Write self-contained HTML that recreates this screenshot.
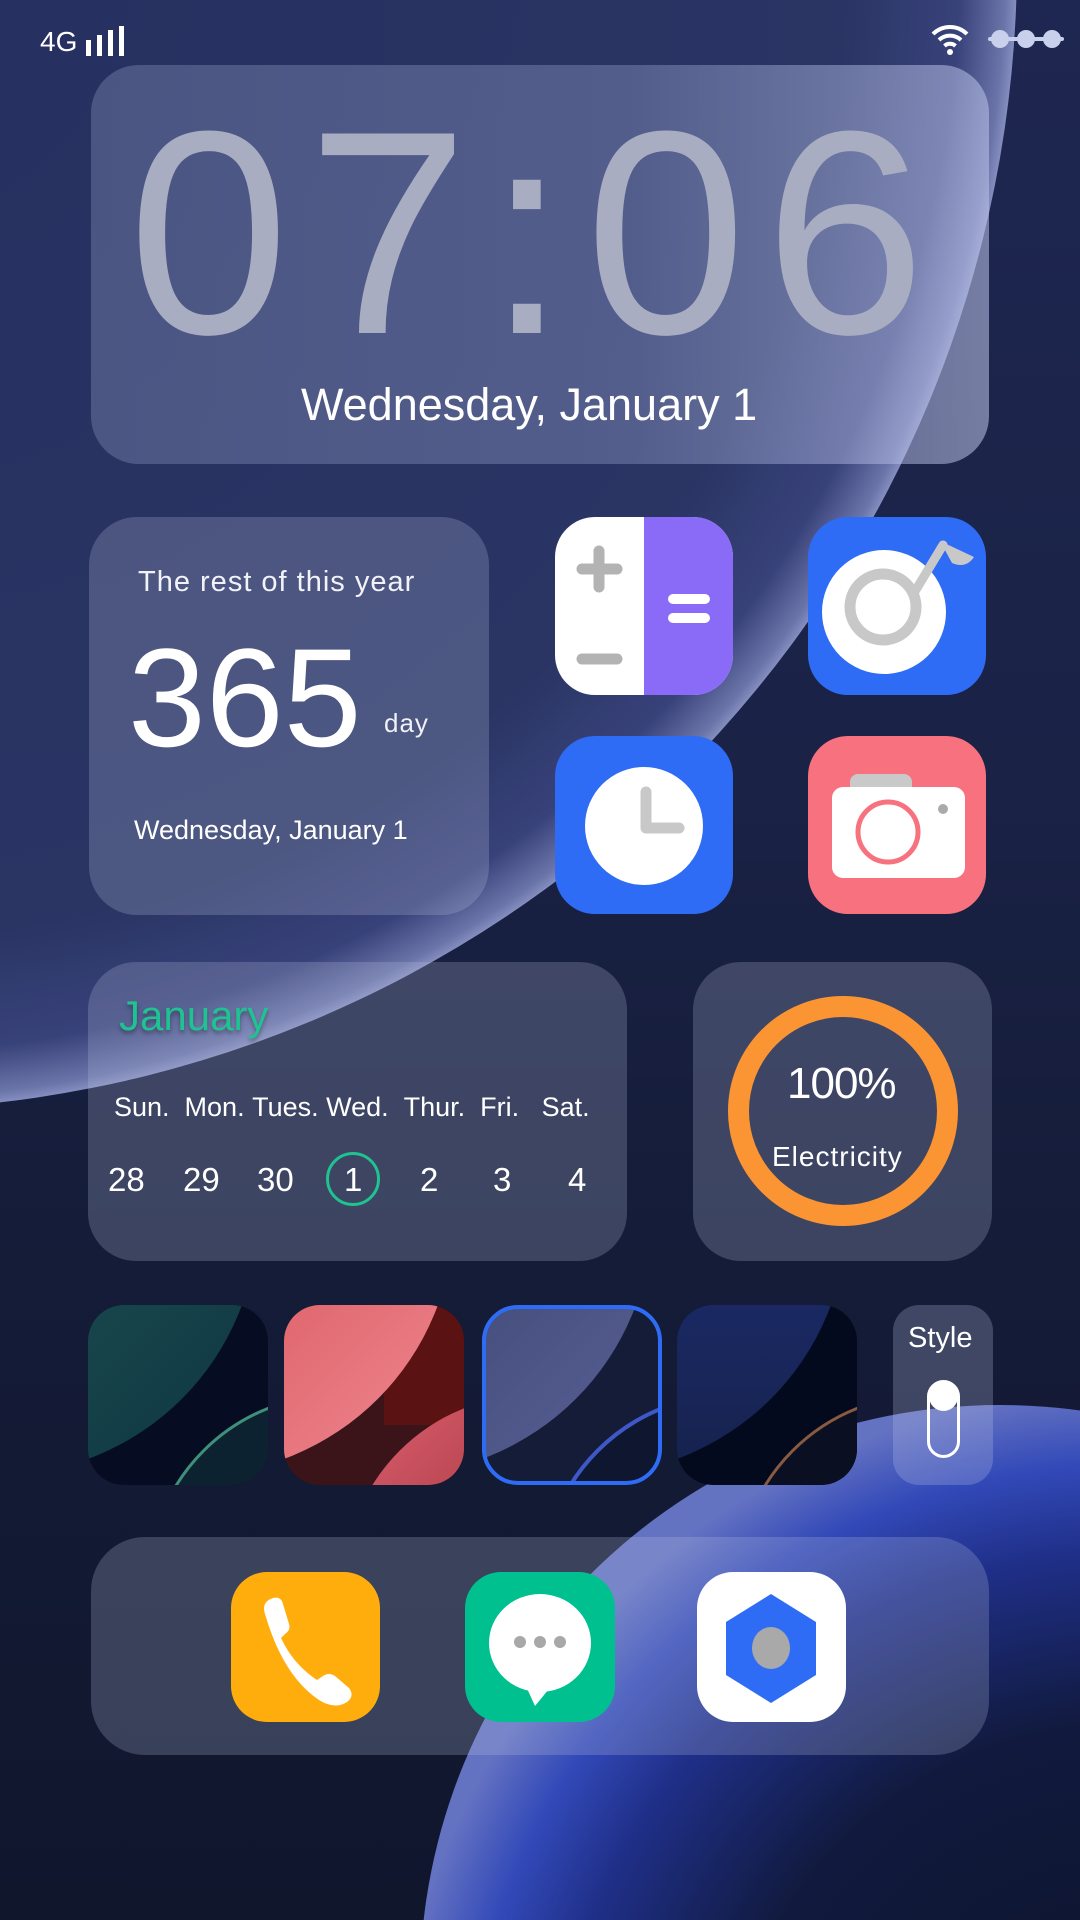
<!DOCTYPE html>
<html style="width:1080px;height:1920px;overflow:hidden"><head><meta charset="utf-8"><style>
*{margin:0;padding:0;box-sizing:border-box}
html,body{width:1080px;height:1920px;overflow:hidden}
body{font-family:"Liberation Sans",sans-serif;color:#fff;background:#141b36}
#root{position:relative;width:1080px;height:1920px;overflow:hidden;background:linear-gradient(180deg,#1e2751 0%,#1a2246 40%,#141b36 70%,#10162c 100%)}
.abs{position:absolute}
.card{position:absolute;background:rgba(190,198,225,0.24);border-radius:48px}
.ic{position:absolute;width:178px;height:178px}
.t{position:absolute;white-space:nowrap;line-height:1}
</style></head><body><div id="root">
<svg class="abs" style="left:0;top:0" width="1080" height="1920" viewBox="0 0 1080 1920">
<defs>
<radialGradient id="rc1" cx="-132" cy="-39" r="1149" gradientUnits="userSpaceOnUse"><stop offset="0" stop-color="#263060"/><stop offset=".85" stop-color="#2a3564"/><stop offset=".95" stop-color="#38427a"/><stop offset=".99" stop-color="#6a74a8"/><stop offset="1" stop-color="#858ebf"/></radialGradient>
<radialGradient id="rc2" cx="1130" cy="2130" r="740" gradientUnits="userSpaceOnUse"><stop offset="0" stop-color="#0c1228"/><stop offset=".55" stop-color="#111a3e"/><stop offset=".78" stop-color="#1f2f88"/><stop offset=".9" stop-color="#3249b8"/><stop offset="1" stop-color="#6472c2"/></radialGradient>
</defs>
<circle cx="-132" cy="-39" r="1149" fill="url(#rc1)"/>
<circle cx="1000" cy="1985" r="580" fill="url(#rc2)"/>
</svg>

<!-- status bar -->
<div class="t" style="left:40px;top:28px;font-size:28px">4G</div>
<svg class="abs" style="left:86px;top:26px" width="46" height="30"><rect x="0" y="14" width="5" height="16" fill="#fff"/><rect x="11" y="9" width="5" height="21" fill="#fff"/><rect x="22" y="4" width="5" height="26" fill="#fff"/><rect x="33" y="0" width="5" height="30" fill="#fff"/></svg>
<svg class="abs" style="left:930px;top:22px" width="40" height="34" viewBox="0 0 40 34"><path d="M3 12 A24 24 0 0 1 37 12" stroke="#fff" stroke-width="4" fill="none"/><path d="M9 18 A16 16 0 0 1 31 18" stroke="#fff" stroke-width="4" fill="none"/><path d="M14.5 24 A8 8 0 0 1 25.5 24" stroke="#fff" stroke-width="4" fill="none"/><circle cx="20" cy="30" r="3" fill="#fff"/></svg>
<svg class="abs" style="left:988px;top:28px" width="76" height="22"><g fill="#c9d0ec"><circle cx="12" cy="11" r="9"/><circle cx="38" cy="11" r="9"/><circle cx="64" cy="11" r="9"/><rect x="0" y="9" width="76" height="4" rx="2"/></g></svg>

<!-- clock card -->
<div class="card" style="left:91px;top:65px;width:898px;height:399px;background:linear-gradient(90deg,rgba(150,160,200,0.32),rgba(150,160,205,0.38) 60%,rgba(190,198,235,0.55))"></div>
<div class="t" style="left:128px;top:88px;font-size:290px;color:#a8adc2;letter-spacing:18px">07:06</div>
<div class="t" style="left:301px;top:382px;font-size:45px;color:#fff">Wednesday, January 1</div>

<!-- year card -->
<div class="card" style="left:89px;top:517px;width:400px;height:398px"></div>
<div class="t" style="left:138px;top:568px;font-size:29px;color:#f2f3f8;letter-spacing:1px">The rest of this year</div>
<div class="t" style="left:128px;top:628px;font-size:140px;color:#fff">365</div>
<div class="t" style="left:384px;top:710px;font-size:26px;color:#f0f0f5;letter-spacing:1px">day</div>
<div class="t" style="left:134px;top:817px;font-size:27px;color:#fff">Wednesday, January 1</div>

<!-- calculator -->
<svg class="ic" style="left:555px;top:517px" viewBox="0 0 178 178"><defs><clipPath id="r1"><rect width="178" height="178" rx="40"/></clipPath></defs><g clip-path="url(#r1)"><rect width="178" height="178" fill="#fff"/><rect x="89" width="89" height="178" fill="#8a6bf7"/></g><g stroke="#b3b3b3" stroke-width="11" stroke-linecap="round"><path d="M27 52H62M44 34V70M27 142H62"/></g><g stroke="#fff" stroke-width="10" stroke-linecap="round"><path d="M118 82H150M118 101H150"/></g></svg>
<!-- music -->
<svg class="ic" style="left:808px;top:517px" viewBox="0 0 178 178"><rect width="178" height="178" rx="40" fill="#2f6cf6"/><circle cx="76" cy="95" r="62" fill="#fff"/><circle cx="75" cy="90" r="33" fill="none" stroke="#c8c8c8" stroke-width="11"/><path d="M106 76 L135 28" stroke="#c8c8c8" stroke-width="9" stroke-linecap="round"/><path d="M132 24 L166 40 Q158 52 144 46 Z" fill="#c8c8c8"/></svg>
<!-- clock -->
<svg class="ic" style="left:555px;top:736px" viewBox="0 0 178 178"><rect width="178" height="178" rx="40" fill="#2f6cf6"/><circle cx="89" cy="90" r="59" fill="#fff"/><path d="M91 56V92H124" stroke="#c8c8c8" stroke-width="11" fill="none" stroke-linecap="round" stroke-linejoin="round"/></svg>
<!-- camera -->
<svg class="ic" style="left:808px;top:736px" viewBox="0 0 178 178"><rect width="178" height="178" rx="40" fill="#f7727e"/><rect x="42" y="38" width="62" height="22" rx="8" fill="#c9c9c9"/><rect x="24" y="51" width="133" height="91" rx="11" fill="#fff"/><circle cx="80" cy="96" r="30" fill="none" stroke="#f7727e" stroke-width="5"/><circle cx="135" cy="73" r="5" fill="#aaa"/></svg>

<!-- calendar card -->
<div class="card" style="left:88px;top:962px;width:539px;height:299px"></div>
<div class="t" style="left:119px;top:995px;font-size:42px;color:#1fc291;text-shadow:0 3px 4px rgba(0,0,0,.35)">January</div>
<div class="t" style="left:114px;top:1094px;font-size:27px;color:#fff">Sun.&nbsp;&nbsp;Mon.&nbsp;Tues.&nbsp;Wed.&nbsp;&nbsp;Thur.&nbsp;&nbsp;Fri.&nbsp;&nbsp;&nbsp;Sat.</div>
<div class="t" style="left:108px;top:1163px;font-size:33px;color:#fff">28</div>
<div class="t" style="left:183px;top:1163px;font-size:33px;color:#fff">29</div>
<div class="t" style="left:257px;top:1163px;font-size:33px;color:#fff">30</div>
<div class="abs" style="left:326px;top:1152px;width:54px;height:54px;border:3px solid #1fc291;border-radius:50%"></div>
<div class="t" style="left:344px;top:1163px;font-size:33px;color:#fff">1</div>
<div class="t" style="left:420px;top:1163px;font-size:33px;color:#fff">2</div>
<div class="t" style="left:493px;top:1163px;font-size:33px;color:#fff">3</div>
<div class="t" style="left:568px;top:1163px;font-size:33px;color:#fff">4</div>

<!-- battery card -->
<div class="card" style="left:693px;top:962px;width:299px;height:299px"></div>
<div class="abs" style="left:728px;top:996px;width:230px;height:230px;border:21px solid #fb9433;border-radius:50%"></div>
<div class="t" style="left:787px;top:1062px;font-size:44px;color:#fff;letter-spacing:-1px">100%</div>
<div class="t" style="left:772px;top:1143px;font-size:28px;color:#fff;letter-spacing:1px">Electricity</div>

<!-- wallpapers -->
<svg class="abs" style="left:88px;top:1305px" width="180" height="180"><defs><clipPath id="w"><rect width="180" height="180" rx="36"/></clipPath><linearGradient id="g1" x1="0" y1="0" x2="1" y2="1"><stop offset="0" stop-color="#2f6b66"/><stop offset="1" stop-color="#0d3440"/></linearGradient></defs><g clip-path="url(#w)"><rect width="180" height="180" fill="#060d22"/><circle cx="-90" cy="-90" r="260" fill="url(#g1)"/><circle cx="250" cy="280" r="190" fill="#0c2230" stroke="#3f8f7a" stroke-width="3"/></g></svg>
<svg class="abs" style="left:284px;top:1305px" width="180" height="180"><defs><linearGradient id="g2" x1="0" y1="0" x2="1" y2="1"><stop offset="0" stop-color="#c0201f"/><stop offset="1" stop-color="#f08a94"/></linearGradient><linearGradient id="g2b" x1="0" y1="0" x2="1" y2="1"><stop offset="0" stop-color="#e06070"/><stop offset="1" stop-color="#5a0a0a"/></linearGradient></defs><g clip-path="url(#w)"><rect width="180" height="180" fill="#3a1418"/><rect x="100" width="80" height="120" fill="#5a1212"/><circle cx="-90" cy="-90" r="260" fill="url(#g2)"/><circle cx="250" cy="280" r="190" fill="url(#g2b)"/></g></svg>
<svg class="abs" style="left:482px;top:1305px" width="180" height="180"><defs><linearGradient id="g3" x1="0" y1="0" x2="1" y2="1"><stop offset="0" stop-color="#1f2748"/><stop offset="1" stop-color="#5a6298"/></linearGradient></defs><g clip-path="url(#w)"><rect width="180" height="180" fill="#141c38"/><circle cx="-90" cy="-90" r="260" fill="url(#g3)"/><circle cx="250" cy="280" r="190" fill="#0e1630" stroke="#3f58c8" stroke-width="4"/></g><rect x="2" y="2" width="176" height="176" rx="34" fill="none" stroke="#2f6cf6" stroke-width="4"/></svg>
<svg class="abs" style="left:677px;top:1305px" width="180" height="180"><defs><linearGradient id="g4" x1="0" y1="0" x2="0" y2="1"><stop offset="0" stop-color="#8a4a3a"/><stop offset=".6" stop-color="#1c2a68"/><stop offset="1" stop-color="#15224d"/></linearGradient></defs><g clip-path="url(#w)"><rect width="180" height="180" fill="#040a1e"/><circle cx="-90" cy="-90" r="260" fill="url(#g4)"/><circle cx="250" cy="280" r="190" fill="#0a0f22" stroke="#8a5a40" stroke-width="3"/></g></svg>
<div class="card" style="left:893px;top:1305px;width:100px;height:180px;border-radius:26px;background:rgba(190,198,230,0.26)"></div>
<div class="t" style="left:908px;top:1324px;font-size:29px;color:#fff">Style</div>
<div class="abs" style="left:927px;top:1380px;width:33px;height:78px;border:3px solid #fff;border-radius:17px"></div>
<div class="abs" style="left:929px;top:1382px;width:29px;height:29px;background:#fff;border-radius:50%"></div>

<!-- dock -->
<div class="card" style="left:91px;top:1537px;width:898px;height:218px;border-radius:54px"></div>
<svg class="abs" style="left:231px;top:1572px" width="149" height="150" viewBox="0 0 149 150"><rect width="149" height="150" rx="36" fill="#ffad0c"/><path d="M34 42 Q30 30 42 26 Q50 24 52 32 L58 52 Q60 58 54 62 L50 66 Q62 92 86 108 L92 104 Q98 100 104 104 L118 116 Q124 124 116 130 Q104 138 88 128 Q52 104 34 42Z" fill="#fff"/></svg>
<svg class="abs" style="left:465px;top:1572px" width="150" height="150" viewBox="0 0 150 150"><rect width="150" height="150" rx="36" fill="#00c08f"/><ellipse cx="75" cy="71" rx="51" ry="49" fill="#fff"/><path d="M60 112 L70 134 L88 112Z" fill="#fff"/><circle cx="55" cy="70" r="6" fill="#a8a8a8"/><circle cx="75" cy="70" r="6" fill="#a8a8a8"/><circle cx="95" cy="70" r="6" fill="#a8a8a8"/></svg>
<svg class="abs" style="left:697px;top:1572px" width="149" height="150" viewBox="0 0 149 150"><rect width="149" height="150" rx="36" fill="#fff"/><path d="M74 22 L119 50 L119 103 L74 131 L29 103 L29 50Z" fill="#2f6cf6"/><ellipse cx="74" cy="76" rx="19" ry="21" fill="#a9a9a9"/></svg>
</div></body></html>
